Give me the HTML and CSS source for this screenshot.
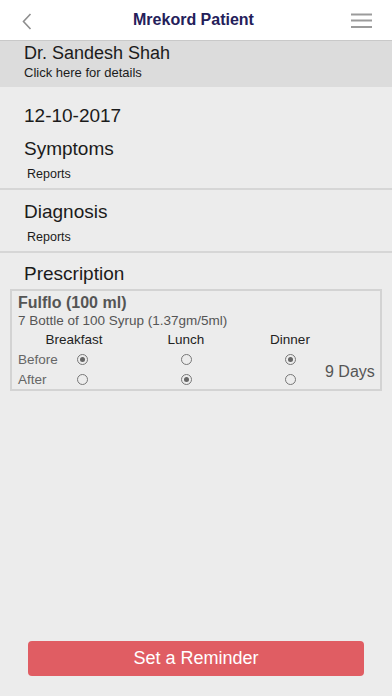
FILE: index.html
```html
<!DOCTYPE html>
<html lang="en">
<head>
    <meta charset="UTF-8">
    <meta name="viewport" content="width=device-width, initial-scale=1.0">
    <title>Mrekord Patient</title>
    <link rel="stylesheet" href="styles.css">
</head>
<body>
    <div class="app">
        <header class="topbar">
            <span class="back">
                <svg width="10" height="17" viewBox="0 0 10 17"><path d="M8.5 1 L1.5 8.5 L8.5 16" fill="none" stroke="#8e8e8e" stroke-width="1.6"/></svg>
            </span>
            <h1 class="title">Mrekord Patient</h1>
            <span class="menu">
                <svg width="22" height="16" viewBox="0 0 22 16"><path d="M0 1.5 H21 M0 7.5 H21 M0 14 H21" stroke="#9b9b9b" stroke-width="1.8"/></svg>
            </span>
        </header>

        <div class="doctor">
            <div class="doctor-name">Dr. Sandesh Shah</div>
            <div class="doctor-sub">Click here for details</div>
        </div>

        <div class="section first">
            <div class="big">12-10-2017</div>
            <div class="big gap">Symptoms</div>
            <div class="small">Reports</div>
        </div>

        <div class="section">
            <div class="big">Diagnosis</div>
            <div class="small">Reports</div>
        </div>

        <div class="section last">
            <div class="big">Prescription</div>
        </div>

        <div class="card">
            <div class="med-name">Fulflo (100 ml)</div>
            <div class="med-sub">7 Bottle of 100 Syrup (1.37gm/5ml)</div>
            <div class="dose">
                <span class="head c1 shift">Breakfast</span>
                <span class="head c2">Lunch</span>
                <span class="head c3">Dinner</span>

                <span class="label before">Before</span>
                <span class="radio on c1 before"></span>
                <span class="radio c2 before"></span>
                <span class="radio on c3 before"></span>

                <span class="label after">After</span>
                <span class="radio c1 after"></span>
                <span class="radio on c2 after"></span>
                <span class="radio c3 after"></span>

                <span class="days">9 Days</span>
            </div>
        </div>

        <div class="footer">
            <button class="reminder">Set a Reminder</button>
        </div>
    </div>
</body>
</html>
```

FILE: styles.css
```css
html, body {
    margin: 0;
    padding: 0;
}
body {
    font-family: "Liberation Sans", Arial, sans-serif;
    background: #ececec;
    color: #1b1b1b;
}
.app {
    min-height: 100vh;
    display: flex;
    flex-direction: column;
}
.topbar {
    height: 40px;
    background: #fff;
    border-bottom: 1px solid #c9c9c9;
    display: flex;
    align-items: center;
    justify-content: space-between;
    padding: 0 19px 0 22px;
}
.back {
    display: flex;
    margin-top: 2px;
}
.menu {
    display: flex;
    margin-top: 1px;
}
.title {
    margin: 0;
    font-size: 16px;
    font-weight: bold;
    color: #24205a;
    padding-left: 4px;
}
.doctor {
    background: #dcdcdc;
    height: 46px;
    padding: 0 24px;
    box-sizing: border-box;
}
.doctor-name {
    font-size: 18px;
    line-height: 22px;
    padding-top: 1px;
}
.doctor-sub {
    font-size: 13px;
    line-height: 16px;
    margin-top: 1px;
}
.section {
    padding: 10px 24px 6px;
    border-bottom: 2px solid #d6d6d6;
}
.section.first {
    padding-top: 17px;
}
.section.last {
    border-bottom: none;
    padding-top: 9px;
    padding-bottom: 3px;
}
.big {
    font-size: 19px;
    line-height: 24px;
}
.big.gap {
    margin-top: 9px;
}
.small {
    font-size: 12.5px;
    line-height: 16px;
    margin-top: 5px;
    padding-left: 3px;
}
.card {
    margin: 0 10px;
    border: 2px solid #d3d3d3;
    padding: 3px 0 0 6px;
    color: #555;
}
.med-name {
    font-size: 16px;
    font-weight: bold;
    line-height: 18px;
}
.med-sub {
    font-size: 13.5px;
    line-height: 16px;
    margin-top: 1px;
}
.dose {
    display: grid;
    grid-template-columns: 42px 44px 60px 44px 60px 44px 1fr;
    grid-template-rows: 20px 20px 20px;
    align-items: center;
    font-size: 13.5px;
}
.head {
    color: #222;
    grid-row: 1;
    justify-self: center;
    white-space: nowrap;
}
.head.shift {
    margin-right: 16px;
}
.c1 { grid-column: 2; }
.c2 { grid-column: 4; }
.c3 { grid-column: 6; }
.before { grid-row: 2; }
.after { grid-row: 3; }
.label {
    grid-column: 1;
    color: #666;
}
.radio {
    justify-self: center;
    width: 9px;
    height: 9px;
    border: 1px solid #777;
    border-radius: 50%;
    position: relative;
}
.radio.on::after {
    content: "";
    position: absolute;
    left: 2px;
    top: 2px;
    width: 5px;
    height: 5px;
    border-radius: 50%;
    background: #666;
}
.days {
    grid-column: 7;
    grid-row: 2 / 4;
    font-size: 16px;
    color: #555;
    padding-left: 13px;
    margin-top: 6px;
}
.footer {
    margin-top: auto;
    padding: 0 28px 20px;
}
.reminder {
    display: block;
    width: 100%;
    height: 35px;
    border: none;
    border-radius: 4px;
    background: #e05d63;
    color: #fff;
    font-family: "Liberation Sans", Arial, sans-serif;
    font-size: 18px;
}
```
